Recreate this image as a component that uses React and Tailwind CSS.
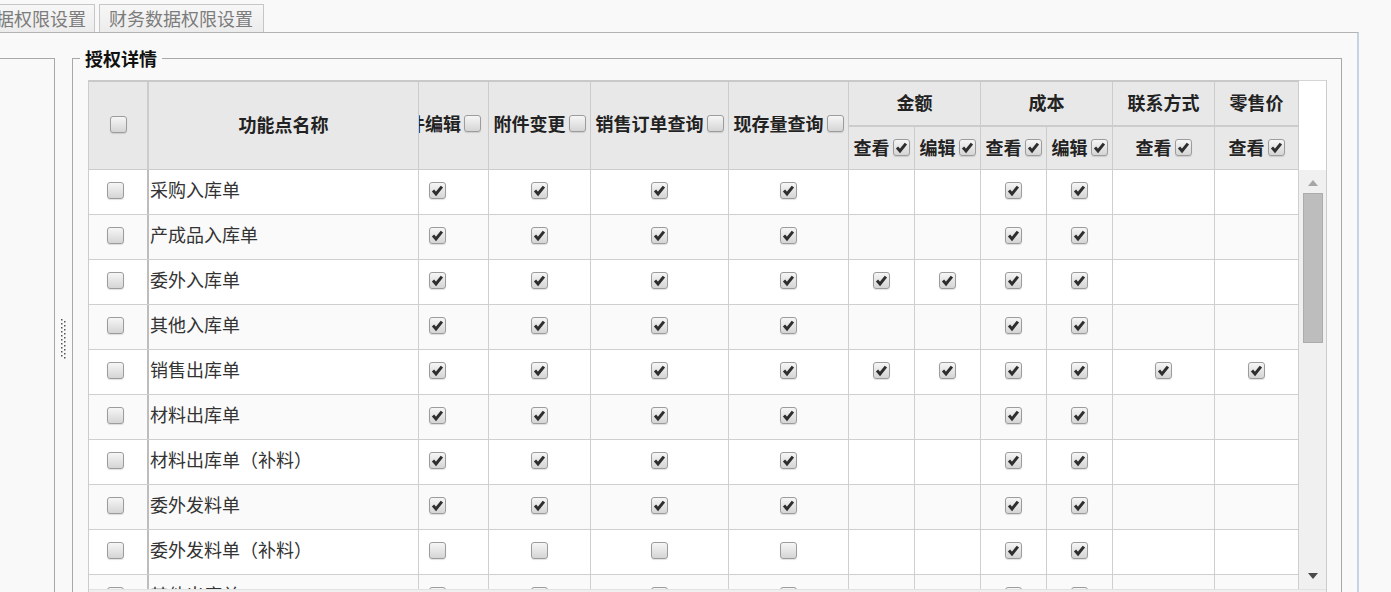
import React from 'react';

const FONT = "font-['Noto_Sans_CJK_SC','Noto_Sans',sans-serif]";

// widths of the scrolled columns (incl. right border)
const colW = [
  'w-[70px]', 'w-[102px]', 'w-[138px]', 'w-[120px]',
  'w-[66px]', 'w-[66px]', 'w-[66px]', 'w-[66px]',
  'w-[102px]', 'w-[84px]',
];

const N = null;
const A = [1, 1, 1, 1, N, N, 1, 1, N, N];

const rows = [
  ['采购入库单', A],
  ['产成品入库单', A],
  ['委外入库单', [1, 1, 1, 1, 1, 1, 1, 1, N, N]],
  ['其他入库单', A],
  ['销售出库单', [1, 1, 1, 1, 1, 1, 1, 1, 1, 1]],
  ['材料出库单', A],
  ['材料出库单（补料）', A],
  ['委外发料单', A],
  ['委外发料单（补料）', [0, 0, 0, 0, N, N, 1, 1, N, N]],
  ['其他出库单', [0, 0, 0, 0, N, N, 0, 0, N, N]],
];

function Box({ checked }) {
  return (
    <span className="inline-flex w-[17px] h-[17px] shrink-0 items-center justify-center rounded-[3px] border border-[#9c9c9c] bg-linear-to-b from-[#f6f6f6] to-[#d5d5d5] shadow-[0_1px_1px_rgba(0,0,0,0.12)]">
      {checked ? (
        <svg width="13" height="13" viewBox="0 0 13 13">
          <path d="M2 6.6 L5 9.9 L10.9 2.6" fill="none" stroke="#2e2e2e" strokeWidth="3" strokeLinejoin="miter" />
        </svg>
      ) : null}
    </span>
  );
}

function HeadLabel({ text, checked }) {
  return (
    <span className="flex items-center gap-[3px] whitespace-nowrap">
      <span>{text}</span>
      <Box checked={checked} />
    </span>
  );
}

function Grip() {
  const dots = [];
  for (let i = 0; i < 10; i++) {
    dots.push(<rect key={'a' + i} x="0" y={i * 4} width="1.5" height="1.5" fill="#555" />);
    dots.push(<rect key={'b' + i} x="3" y={i * 4 + 2} width="1.5" height="1.5" fill="#555" />);
  }
  return (
    <svg width="5" height="40" viewBox="0 0 5 40">
      {dots}
    </svg>
  );
}

function Header() {
  return (
    <div className="flex h-[90px] border-t-2 border-[#c9c9c9] bg-[#e8e8e8] font-bold text-[18px] text-[#222]">
      <div className="w-[60px] shrink-0 border-r-2 border-b border-[#cccccc] flex items-center pl-[21px] pb-[2px]">
        <Box />
      </div>
      <div className="w-[270px] shrink-0 border-r border-b border-[#cccccc] flex items-center justify-center pb-[2px]">
        功能点名称
      </div>
      <div className="w-[70px] shrink-0 border-r border-b border-[#cccccc] flex items-center justify-end pr-[7px] pb-[4px] overflow-hidden">
        <HeadLabel text="附件编辑" />
      </div>
      <div className="w-[102px] shrink-0 border-r border-b border-[#cccccc] flex items-center justify-center pb-[4px]">
        <HeadLabel text="附件变更" />
      </div>
      <div className="w-[138px] shrink-0 border-r border-b border-[#cccccc] flex items-center justify-center pb-[4px]">
        <HeadLabel text="销售订单查询" />
      </div>
      <div className="w-[120px] shrink-0 border-r border-b border-[#cccccc] flex items-center justify-center pb-[4px]">
        <HeadLabel text="现存量查询" />
      </div>
      {[
        ['金额', 'w-[132px]', ['查看', '编辑']],
        ['成本', 'w-[132px]', ['查看', '编辑']],
        ['联系方式', 'w-[102px]', ['查看']],
        ['零售价', 'w-[84px]', ['查看']],
      ].map(([title, w, subs]) => (
        <div key={title} className={`${w} shrink-0 flex flex-col`}>
          <div className="h-[45px] border-r border-b-2 border-[#cccccc] flex items-center justify-center pb-[2px]">
            {title}
          </div>
          <div className="h-[43px] flex">
            {subs.map((s) => (
              <div
                key={s}
                className={`${subs.length === 2 ? 'w-[66px]' : 'flex-1'} border-r border-b border-[#cccccc] flex items-center justify-center pb-[1px]`}
              >
                <HeadLabel text={s} checked />
              </div>
            ))}
          </div>
        </div>
      ))}
    </div>
  );
}

function Row({ name, vals, odd }) {
  return (
    <div className={`flex h-[45px] shrink-0 border-b border-[#cfcfcf] ${odd ? 'bg-white' : 'bg-[#fafafa]'}`}>
      <div className="w-[60px] shrink-0 border-r-2 border-[#bdbdbd] flex items-center pl-[18px] pb-[3px]">
        <Box />
      </div>
      <div className="w-[270px] shrink-0 border-r border-[#cfcfcf] flex items-center pl-px pb-[5px] text-[18px] text-[#333] whitespace-nowrap">
        {name}
      </div>
      {vals.map((v, i) => (
        <div
          key={i}
          className={`${colW[i]} shrink-0 border-r border-[#cfcfcf] flex items-center pb-[3px] ${i === 0 ? 'justify-start pl-[10px]' : 'justify-center'}`}
        >
          {v === null ? null : <Box checked={v === 1} />}
        </div>
      ))}
    </div>
  );
}

function Scrollbar() {
  return (
    <div className="w-[27px] shrink-0 h-full bg-[#f0f0f0] flex flex-col items-center">
      <svg className="mt-[10px]" width="10" height="6" viewBox="0 0 10 6">
        <path d="M0 6 L5 0 L10 6 Z" fill="#a6a6a6" />
      </svg>
      <div className="mt-[7px] w-[20px] h-[150px] bg-[#bdbdbd] border border-[#acacac]" />
      <div className="flex-1" />
      <svg className="mb-[10px]" width="10" height="6" viewBox="0 0 10 6">
        <path d="M0 0 L10 0 L5 6 Z" fill="#4a4a4a" />
      </svg>
    </div>
  );
}

export default function App() {
  return (
    <div className={`w-[1391px] h-[592px] overflow-hidden bg-[#f9f9f9] ${FONT}`}>
      {/* tabs */}
      <div className="h-[32px] flex items-end gap-[4px] text-[18px] text-[#7c7c7c]">
        <div className="w-[95px] h-[28px] flex items-center justify-end pr-[8px] overflow-hidden border-r border-t border-[#c6c6c6] bg-linear-to-b from-[#f7f7f7] to-[#ececec] whitespace-nowrap">
          数据权限设置
        </div>
        <div className="h-[28px] flex items-center pl-[9px] pr-[10px] border border-b-0 border-[#c6c6c6] bg-linear-to-b from-[#f7f7f7] to-[#ececec] whitespace-nowrap">
          财务数据权限设置
        </div>
      </div>

      {/* panel */}
      <div className="w-[1359px] h-[560px] border-t border-r-2 border-t-[#b3b3b3] border-r-[#c4d4e3] flex pt-[13px]">
        <div className="w-[55px] shrink-0 mt-[12px] border-t border-r border-[#a8a8a8]" />
        <div className="w-[17px] shrink-0 flex items-start justify-center pt-[273px]">
          <Grip />
        </div>
        <fieldset className="w-[1270px] shrink-0 border border-b-0 border-[#a8a8a8] min-w-0">
          <legend className="ml-[7px] px-[5px] text-[18px] leading-[24px] font-bold text-[#111]">授权详情</legend>
          <div className="mt-[10px] ml-[15px] w-[1239px] border-l border-r border-[#cccccc] bg-white flex flex-col">
            <div className="flex">
              <Header />
              <div className="w-[27px] shrink-0 h-[90px] border-t border-[#d5d5d5] bg-white" />
            </div>
            <div className="flex h-[419px]">
              <div className="flex flex-col w-[1210px] overflow-hidden">
                {rows.map(([name, vals], i) => (
                  <Row key={name} name={name} vals={vals} odd={i % 2 === 0} />
                ))}
              </div>
              <Scrollbar />
            </div>
            <div className="h-[17px] bg-[#efefef] border-t border-[#e2e2e2]" />
          </div>
        </fieldset>
      </div>
    </div>
  );
}
